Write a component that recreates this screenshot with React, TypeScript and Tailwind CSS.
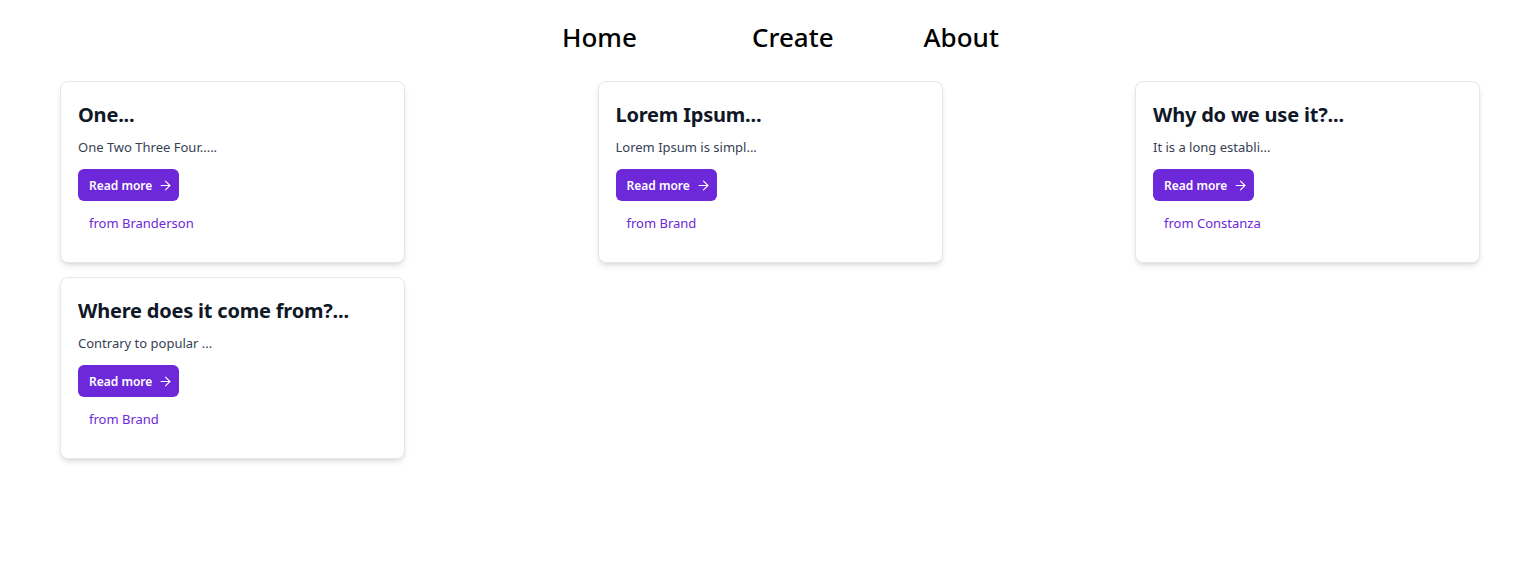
import { ArrowRight } from "lucide-react";

type Post = {
  title: string;
  excerpt: string;
  author: string;
};

const posts: Post[] = [
  { title: "One...", excerpt: "One Two Three Four.....", author: "Branderson" },
  { title: "Lorem Ipsum...", excerpt: "Lorem Ipsum is simpl...", author: "Brand" },
  { title: "Why do we use it?...", excerpt: "It is a long establi...", author: "Constanza" },
  { title: "Where does it come from?...", excerpt: "Contrary to popular ...", author: "Brand" },
];

// ── Top navigation ───────────────────────────────────────────────────────────
function Nav() {
  return (
    <nav className="flex h-[74px] items-center pl-[562px] text-[26px] font-medium text-black">
      <a className="leading-none">Home</a>
      <a className="ml-[115px] leading-none">Create</a>
      <a className="ml-[90px] leading-none">About</a>
    </nav>
  );
}

// ── Single post card ─────────────────────────────────────────────────────────
function PostCard({ title, excerpt, author }: Post) {
  return (
    <article className="flex h-[182px] w-[345px] flex-col rounded-lg border border-gray-200 bg-white px-[17px] pt-[19px] shadow-md">
      <h2 className="text-[20px] font-bold leading-7 tracking-[-0.2px] text-gray-900">{title}</h2>
      <p className="mt-[8px] text-[13px] leading-5 text-gray-700">{excerpt}</p>
      <div className="mt-[12px]">
        <button className="flex h-8 items-center gap-[6px] rounded-md bg-[#6d28d9] pl-[11px] pr-[6px] text-[12px] font-semibold text-white">
          <span className="pt-[2px]">Read more</span>
          <ArrowRight size={15} strokeWidth={1.75} />
        </button>
      </div>
      <p className="mt-[12px] pl-[11px] text-[13px] leading-5 text-[#6d28d9]">from {author}</p>
    </article>
  );
}

export default function App() {
  return (
    <div className="min-h-[585px] bg-white font-['Noto_Sans',sans-serif]">
      <Nav />
      <main className="grid grid-cols-[repeat(3,345px)] justify-between gap-y-[14px] px-[60px] pt-[7px]">
        {posts.map((p) => (
          <PostCard key={p.title} {...p} />
        ))}
      </main>
    </div>
  );
}
